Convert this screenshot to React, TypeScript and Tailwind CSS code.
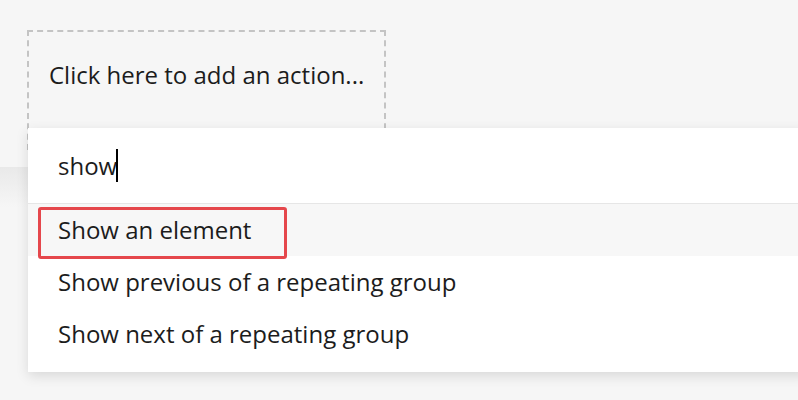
import React from 'react';

const options = [
  'Show an element',
  'Show previous of a repeating group',
  'Show next of a repeating group',
];

export default function App() {
  return (
    <div className="relative h-[400px] w-[798px] overflow-hidden bg-[#f6f6f6] font-['Open_Sans',sans-serif] text-[#1c1c1c]">
      {/* strip behind the dropdown */}
      <div className="absolute left-0 top-[167px] h-[40px] w-full bg-gradient-to-b from-[#e9e9e9] to-[#f6f6f6]" />

      <div className="relative pl-[27px] pt-[30px]">
        <div className="h-[120px] w-[359px] whitespace-nowrap border-2 border-dashed border-[#c4c4c4] pl-[20px] pt-[27px] text-[24px] leading-[32px]">
          Click here to add an action...
        </div>
      </div>

      {/* dropdown */}
      <div className="absolute left-[28px] top-[128px] w-[780px] bg-white shadow-[0_4px_12px_rgba(0,0,0,0.12)]">
        <div className="flex h-[76px] items-center border-b border-[#e6e6e6] pl-[30px] text-[24px] leading-[32px]">
          <span>show</span>
          <span className="-ml-px inline-block h-[33px] w-[2px] bg-black" />
        </div>
        <div className="flex flex-col pb-[12px]">
          {options.map((o, i) => (
            <div
              key={o}
              className={`flex h-[52px] items-center whitespace-nowrap pl-[30px] text-[24px] leading-[32px] ${i === 0 ? 'bg-[#f7f7f7]' : ''}`}
            >
              {o}
            </div>
          ))}
        </div>
        <div className="absolute left-[10px] top-[79px] h-[52px] w-[249px] rounded-[3px] border-[3px] border-[#e5474c]" />
      </div>
    </div>
  );
}
